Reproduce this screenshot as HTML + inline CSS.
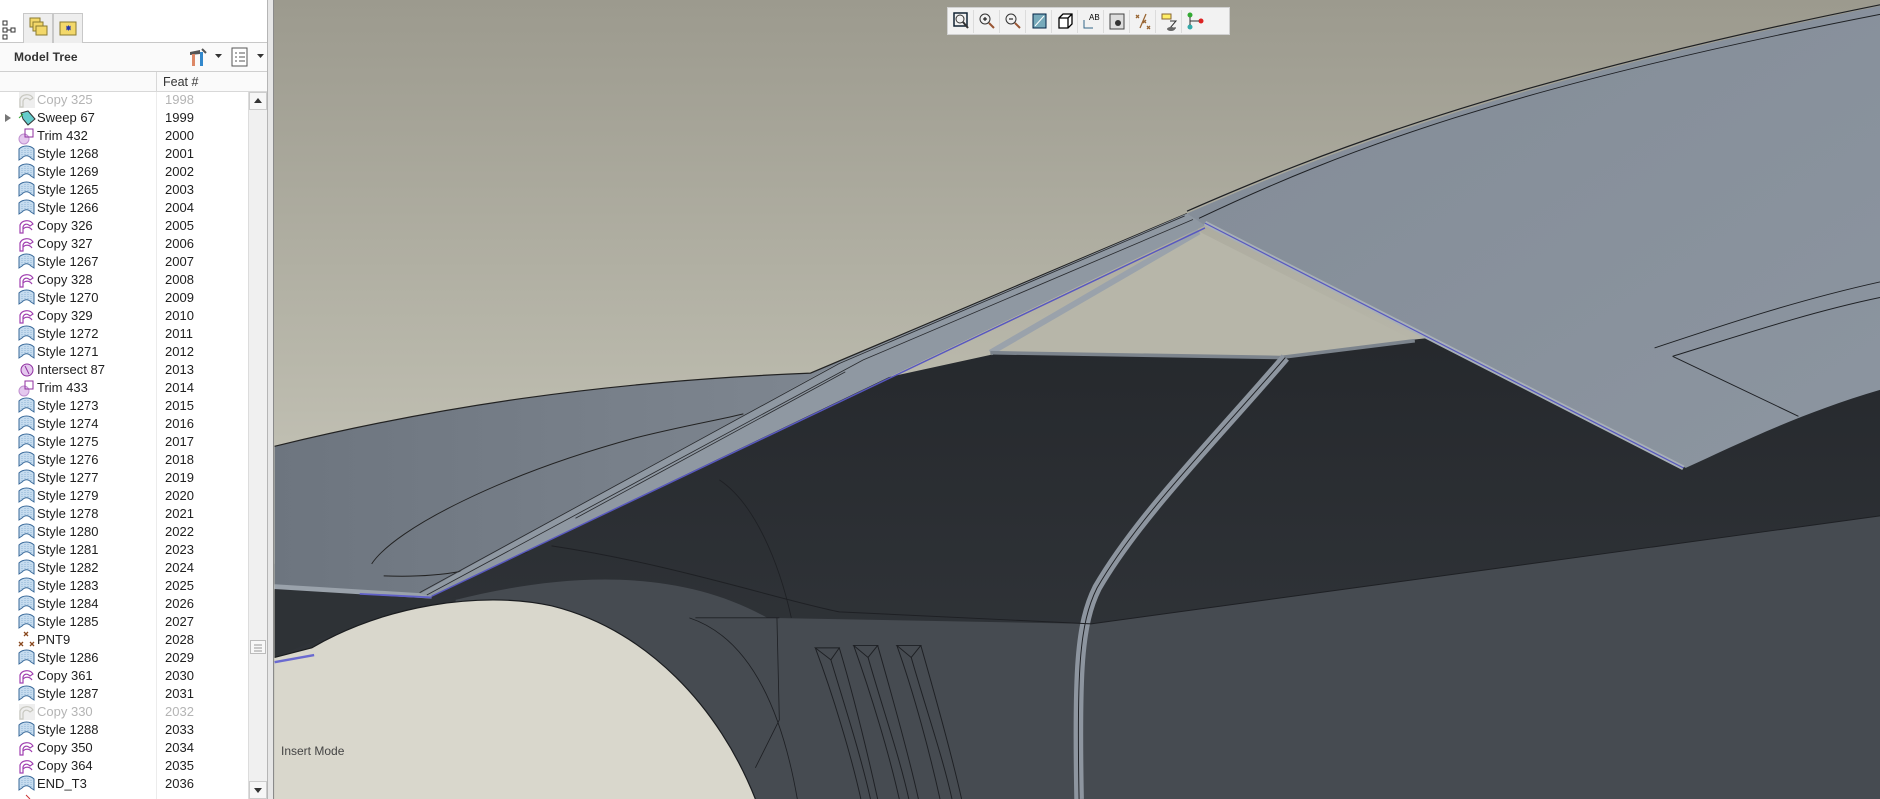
<!DOCTYPE html>
<html style="width:1880px;height:799px;overflow:hidden"><head><meta charset="utf-8">
<style>
*{margin:0;padding:0;box-sizing:border-box}
body{width:1880px;height:799px;overflow:hidden;position:relative;font-family:"Liberation Sans",sans-serif;background:#c8c7bb}
#vp{position:absolute;left:0;top:0;width:1880px;height:799px}
#panel{position:absolute;left:0;top:0;width:274px;height:799px;background:#fff;border-right:1px solid #8a8a8a;overflow:hidden}
#panel .strip{position:absolute;left:267px;top:0;width:7px;height:799px;background:#e6e6e6;border-left:1px solid #b5b5b5}
.tabs{position:absolute;left:0;top:0;width:267px;height:43px;background:#fff;border-bottom:1px solid #c8c8c8}
.tab{position:absolute;top:13px;height:30px;background:#eeeeee;border:1px solid #c8c8c8;border-bottom:none}
.hdr{position:absolute;left:0;top:43px;width:267px;height:29px;background:#fafafa;border-bottom:1px solid #cfcfcf}
.hdr span{position:absolute;left:14px;top:7px;font-size:12px;color:#333;font-weight:bold;letter-spacing:0.1px}
.colh{position:absolute;left:0;top:72px;width:267px;height:20px;background:#fafafa;border-bottom:1px solid #d8d8d8}
.colh span{position:absolute;left:163px;top:3px;font-size:12.5px;color:#333}
.colh i{position:absolute;left:156px;top:0;width:1px;height:20px;background:#d8d8d8}
.coldiv{position:absolute;left:156px;top:92px;width:1px;height:707px;background:#ececec}
.row{position:absolute;left:0;width:248px;height:18px;font-size:13px;color:#1e1e1e}
.row .n{position:absolute;left:37px;top:1px}
.row .f{position:absolute;left:165px;top:1px}
.row svg{position:absolute;left:18px;top:0}
.row.dis{color:#b4b4b4}
.sb{position:absolute;left:248px;top:92px;width:19px;height:707px;background:#f0f0f0;border-left:1px solid #dcdcdc}
.tb{position:absolute;left:947px;top:7px;width:283px;height:28px;background:#f2f2f2;border:1px solid #d0d0d0}
.tb div{position:absolute;top:2px;width:25px;height:23px;border-right:1px solid #dcdcdc}
.im{position:absolute;left:281px;top:744px;font-size:12px;color:#444}
</style></head><body>
<svg id="vp" viewBox="0 0 1568 666" preserveAspectRatio="none">
<defs>
<linearGradient id="bg" x1="0" y1="0" x2="0" y2="1"><stop offset="0" stop-color="#9c9a8e"/><stop offset="0.45" stop-color="#b8b7aa"/><stop offset="1" stop-color="#dedcd1"/></linearGradient>
<linearGradient id="dk" x1="0" y1="0" x2="0" y2="1"><stop offset="0" stop-color="#24272b"/><stop offset="1" stop-color="#34383d"/></linearGradient>
<linearGradient id="rf" x1="0" y1="0" x2="1" y2="1"><stop offset="0" stop-color="#838c97"/><stop offset="1" stop-color="#8c95a0"/></linearGradient>
<linearGradient id="hd" x1="0" y1="0" x2="1" y2="0"><stop offset="0" stop-color="#6d757f"/><stop offset="1" stop-color="#8a929c"/></linearGradient>
</defs>
<rect width="1568" height="666" fill="url(#bg)"/>
<!-- dark body -->
<path d="M229,470 L600,345 L830,295 L1075,297 L1180,283 L1568,240 L1568,666 L229,666Z" fill="url(#dk)"/>
<path d="M380,500 C460,480 560,470 640,515 L910,520 L1568,430 L1568,666 L380,666Z" fill="#464b51"/>
<path d="M229,492 L380,498 C330,510 280,525 229,548Z" fill="#2e3236"/>
<!-- wheel arch -->
<path d="M229,548 L260,540 C320,505 400,492 460,505 C540,525 600,590 630,666 L229,666Z" fill="#d9d7cc"/>
<path d="M229,548 L260,540 C320,505 400,492 460,505 C540,525 600,590 630,666" fill="none" stroke="#1a1c1f" stroke-width="1"/>
<path d="M229,552 L262,546" stroke="#6a6ad0" stroke-width="2"/>
<!-- triangle window -->
<path d="M826,294 L1000,193 L1180,284 L1075,297 L960,292Z" fill="#b7b6a9"/>
<path d="M826,294 L1000,193" stroke="#9aa2ab" stroke-width="5"/>
<path d="M826,294 L1068,298 L1180,284" stroke="#7c848d" stroke-width="3" fill="none"/>
<!-- hood -->
<path d="M229,372 C360,340 500,318 676,311 L990,178 L1005,188 L360,497 L229,489Z" fill="url(#hd)"/>
<path d="M229,372 C360,340 500,318 676,311 L990,178" fill="none" stroke="#222" stroke-width="1"/>
<path d="M310,470 C330,440 420,395 530,365 C570,355 600,350 620,345" fill="none" stroke="#222" stroke-width="0.8"/>
<path d="M320,480 C370,482 400,475 440,460" fill="none" stroke="#222" stroke-width="0.8"/>
<path d="M229,489 L360,497" stroke="#9aa2ab" stroke-width="4"/>
<path d="M300,495 L360,498" stroke="#6060c8" stroke-width="1.5"/>
<!-- band -->
<path d="M350,495 L700,302 L990,178 L1005,188 L360,497Z" fill="#8f98a2"/>
<path d="M360,497 L1005,190" stroke="#5858c0" stroke-width="1.2"/>
<path d="M350,494 L700,303 L988,180 M356,496 L720,300 L995,183 M480,432 L705,310" stroke="#2a2c30" stroke-width="0.7" fill="none"/>
<!-- roof -->
<path d="M990,178 C1100,130 1250,70 1568,5 L1568,325 C1500,345 1450,370 1406,390 L1005,188 Z" fill="url(#rf)"/>
<path d="M990,176 C1100,128 1250,68 1568,4" fill="none" stroke="#1e2024" stroke-width="1"/>
<path d="M1000,182 C1120,125 1260,72 1568,12" fill="none" stroke="#1e2024" stroke-width="0.8"/>
<path d="M1005,186 L1404,390" stroke="#a8b0b8" stroke-width="4"/>
<path d="M1005,186 L1404,390" stroke="#5858c0" stroke-width="1"/>
<path d="M1380,290 C1440,270 1500,250 1568,235 M1395,297 C1450,280 1510,260 1568,248 M1395,297 L1500,347" fill="none" stroke="#1e2024" stroke-width="0.8"/>
<!-- B pillar -->
<path d="M1072,298 C1010,370 950,430 915,490 C900,520 898,560 900,666" fill="none" stroke="#8d959f" stroke-width="8"/>
<path d="M1072,298 C1010,370 950,430 915,490 C900,520 898,560 900,666" fill="none" stroke="#1e2024" stroke-width="0.8"/>
<!-- panel lines -->
<path d="M460,455 C560,470 650,500 700,510 L910,520 L1568,430" fill="none" stroke="#1e2024" stroke-width="0.8"/>
<path d="M575,515 C620,530 650,580 665,666 M600,400 C630,420 650,470 660,515 M580,515 L650,515 M648,515 L650,600 L630,640" fill="none" stroke="#1e2024" stroke-width="0.7"/>
<!-- vents -->
<g fill="none" stroke="#1e2024" stroke-width="0.8">
<path d="M680,540 L700,540 L693,550Z M712,538 L732,538 L724,548Z M748,538 L768,538 L760,548Z"/>
<path d="M680,540 C695,580 710,630 718,666 M693,550 C705,590 718,630 726,666 M700,540 C712,580 724,630 732,666"/>
<path d="M712,538 C727,580 742,630 750,666 M724,548 C736,590 750,630 758,666 M732,538 C744,580 758,630 766,666"/>
<path d="M748,538 C763,580 776,630 784,666 M760,548 C772,590 786,630 794,666 M768,538 C780,580 794,630 802,666"/>
</g>
</svg>

<div class="tb">
<div style="left:1px"><svg width="25" height="23"><rect x="5" y="3" width="13" height="13" fill="none" stroke="#123" stroke-width="1.5"/><circle cx="11" cy="9" r="4" fill="none" stroke="#333"/><path d="M14,12 L19,18" stroke="#333" stroke-width="2"/></svg></div>
<div style="left:27px"><svg width="25" height="23"><circle cx="10" cy="9" r="5" fill="none" stroke="#333"/><path d="M8,9h4M10,7v4" stroke="#000"/><path d="M14,13 L19,18" stroke="#953" stroke-width="2"/></svg></div>
<div style="left:53px"><svg width="25" height="23"><circle cx="10" cy="9" r="5" fill="none" stroke="#333"/><path d="M8,9h4" stroke="#000"/><path d="M14,13 L19,18" stroke="#953" stroke-width="2"/></svg></div>
<div style="left:79px"><svg width="25" height="23"><rect x="6" y="4" width="13" height="14" fill="#7ab" stroke="#024"/><path d="M8,16 L17,6" stroke="#fff"/></svg></div>
<div style="left:105px"><svg width="25" height="23"><path d="M6,8 L10,4 L19,4 L19,14 L15,18 L6,18Z M6,8 L15,8 L15,18 M15,8 L19,4" fill="#fff" stroke="#000" stroke-width="1.3"/></svg></div>
<div style="left:131px"><svg width="25" height="23"><text x="10" y="10" font-size="8" font-family="Liberation Sans">AB</text><path d="M5,10 L5,18 L14,18" fill="none" stroke="#368"/></svg></div>
<div style="left:157px"><svg width="25" height="23"><rect x="5" y="4" width="14" height="15" fill="#ddd" stroke="#444"/><circle cx="13" cy="13" r="3" fill="#333"/></svg></div>
<div style="left:183px"><svg width="25" height="23"><path d="M5,5l3,3M8,5l-3,3M12,10l3,3M15,10l-3,3M16,16l3,3M19,16l-3,3M15,4L9,18" stroke="#963" stroke-width="1.3"/></svg></div>
<div style="left:209px"><svg width="25" height="23"><rect x="5" y="4" width="9" height="5" fill="#fe6" stroke="#863"/><path d="M13,11h6l-6,7h6" fill="none" stroke="#333"/><ellipse cx="14" cy="19" rx="4" ry="2" fill="#666"/></svg></div>
<div style="left:235px;border:none"><svg width="25" height="23"><circle cx="7" cy="5" r="2.5" fill="#3a3"/><circle cx="7" cy="17" r="2.5" fill="#3aa"/><circle cx="18" cy="11" r="2.5" fill="#d22"/><path d="M7,7v8M7,11h9" stroke="#333"/></svg></div>
</div>

<div class="im">Insert Mode</div>

<svg width="0" height="0" style="position:absolute"><defs>
<g id="ist"><path d="M1,15 L1,4 C5,0 12,0 16,4 L16,15 L13,13 C10,10 7,10 4,13Z" fill="#c6dcef" stroke="#3a6a9a"/><path d="M4,5v7M7,3v8M10,3v8M13,5v7" stroke="#8fb4d6" stroke-dasharray="1 1"/></g>
<g id="icp"><path d="M2,16 L2,8 C4,3 12,2 15,7 L12,9 C9,6 6,7 5,10 L5,16Z M5,12 C8,9 12,10 14,13" fill="none" stroke="#a040b0" stroke-width="1.2"/></g>
<g id="idc"><rect x="1" y="1" width="16" height="16" fill="#eee"/><path d="M2,16 L2,8 C4,3 12,2 15,7 L12,9 C9,6 6,7 5,10 L5,16Z" fill="none" stroke="#c8c8c0" stroke-width="1.2"/></g>
<g id="itr"><circle cx="6" cy="12" r="5" fill="#e4c8ee" stroke="#c090d0"/><rect x="7" y="2" width="8" height="8" fill="none" stroke="#9030a0"/></g>
<g id="isw"><path d="M3,4 L10,2 L17,10 L10,16 L5,10Z" fill="#6cc" stroke="#333"/><path d="M1,9 L5,5" stroke="#3a3"/></g>
<g id="ipn"><path d="M6,1l4,4M10,1l-4,4M1,11l4,4M5,11l-4,4M12,11l4,4M16,11l-4,4" stroke="#8a4a20" stroke-width="1.3"/></g>
<g id="iin"><circle cx="9" cy="9" r="6" fill="#e4c8ee" stroke="#9030a0"/><path d="M7,5 L11,13" stroke="#9030a0"/></g>
</defs></svg>

<div id="panel">
<div class="tabs">
<svg style="position:absolute;left:2px;top:20px" width="14" height="20"><rect x="1" y="1" width="4" height="4" fill="none" stroke="#333"/><rect x="1" y="8" width="4" height="4" fill="none" stroke="#333"/><rect x="1" y="15" width="4" height="4" fill="none" stroke="#333"/><rect x="9" y="8" width="4" height="4" fill="none" stroke="#333"/><path d="M5,10h4" stroke="#333"/></svg>
<div class="tab" style="left:23px;width:30px"><svg width="28" height="28"><rect x="6" y="4" width="10" height="9" fill="#f3d86a" stroke="#8a7a30"/><rect x="9" y="8" width="10" height="9" fill="#f3d86a" stroke="#8a7a30"/><rect x="12" y="12" width="11" height="9" fill="#f3d86a" stroke="#8a7a30"/></svg></div>
<div class="tab" style="left:53px;width:30px"><svg width="28" height="28"><rect x="6" y="8" width="16" height="13" fill="#f3d86a" stroke="#8a7a30"/><path d="M12,14h5M14.5,11.5v5M12.5,12l4,4M16.5,12l-4,4" stroke="#23a"/></svg></div>
</div>
<div class="hdr"><span>Model Tree</span>
<svg style="position:absolute;left:188px;top:5px" width="22" height="20"><path d="M2,4 L12,2 L12,6 L2,7Z" fill="#555"/><rect x="4" y="6" width="3" height="12" fill="#d86"/><rect x="12" y="4" width="3" height="14" fill="#38c"/><path d="M14,1 l4,4" stroke="#555" stroke-width="2"/></svg>
<svg style="position:absolute;left:215px;top:11px" width="7" height="5"><path d="M0,0h7L3.5,4Z" fill="#333"/></svg>
<svg style="position:absolute;left:231px;top:4px" width="17" height="20"><rect x="1" y="1" width="15" height="18" fill="#fff" stroke="#555"/><path d="M4,6h2M8,6h6M4,10h2M8,10h6M4,14h2M8,14h6" stroke="#555"/></svg>
<svg style="position:absolute;left:257px;top:11px" width="7" height="5"><path d="M0,0h7L3.5,4Z" fill="#333"/></svg>
</div>
<div class="colh"><i></i><span>Feat #</span></div>
<div class="coldiv"></div>
<div class="sb">
<div style="position:absolute;left:0;top:0;width:18px;height:18px;background:#f6f6f6;border:1px solid #ccc"><svg width="16" height="16"><path d="M4,10h8L8,5Z" fill="#333"/></svg></div>
<div style="position:absolute;left:1px;top:548px;width:16px;height:14px;background:#f8f8f8;border:1px solid #bbb"><svg width="14" height="12"><path d="M3,3h8M3,6h8M3,9h8" stroke="#999"/></svg></div>
<div style="position:absolute;left:0;top:689px;width:18px;height:18px;background:#f6f6f6;border:1px solid #ccc"><svg width="16" height="16"><path d="M4,6h8L8,11Z" fill="#333"/></svg></div>
</div>
<div class="strip"></div>
<div id="rows"></div>
</div>
<script>
var d=[["dc","Copy 325"],["sw","Sweep 67"],["tr","Trim 432"],["st","Style 1268"],["st","Style 1269"],["st","Style 1265"],["st","Style 1266"],["cp","Copy 326"],["cp","Copy 327"],["st","Style 1267"],["cp","Copy 328"],["st","Style 1270"],["cp","Copy 329"],["st","Style 1272"],["st","Style 1271"],["in","Intersect 87"],["tr","Trim 433"],["st","Style 1273"],["st","Style 1274"],["st","Style 1275"],["st","Style 1276"],["st","Style 1277"],["st","Style 1279"],["st","Style 1278"],["st","Style 1280"],["st","Style 1281"],["st","Style 1282"],["st","Style 1283"],["st","Style 1284"],["st","Style 1285"],["pn","PNT9"],["st","Style 1286"],["cp","Copy 361"],["st","Style 1287"],["dc","Copy 330"],["st","Style 1288"],["cp","Copy 350"],["cp","Copy 364"],["st","END_T3"]];
var h="";for(var i=0;i<d.length;i++){var r=d[i];h+='<div class="row'+(r[0]=="dc"?" dis":"")+'" style="top:'+(91+i*18)+'px">'+(r[0]=="sw"?'<svg style="left:5px;top:5px" width="7" height="8"><path d="M0,0L6,4L0,8Z" fill="#777"/></svg>':'')+'<svg width="18" height="18"><use href="#i'+r[0]+'"/></svg><span class="n">'+r[1]+'</span><span class="f">'+(1998+i)+'</span></div>';}
h+='<div class="row" style="top:793px;height:6px;overflow:hidden"><svg width="18" height="6"><path d="M8,2 l4,4" stroke="#c33"/></svg></div>';
document.getElementById("rows").innerHTML=h;
</script>
</body></html>
